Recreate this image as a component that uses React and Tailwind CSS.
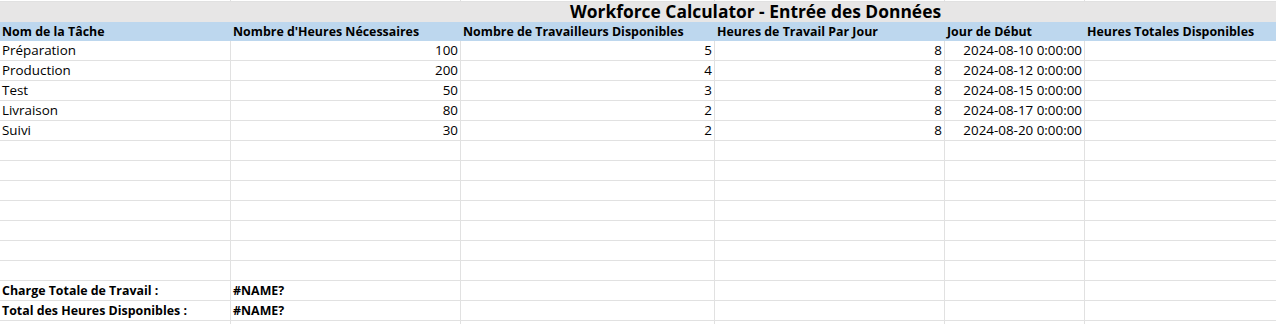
import React from "react";

const cols = "grid-cols-[231px_230px_254px_230px_140px_1fr]";
const font = { fontFamily: '"Open Sans", "Noto Sans", sans-serif' };

const data = [
  ["Préparation", "100", "5", "8", "2024-08-10 0:00:00"],
  ["Production", "200", "4", "8", "2024-08-12 0:00:00"],
  ["Test", "50", "3", "8", "2024-08-15 0:00:00"],
  ["Livraison", "80", "2", "8", "2024-08-17 0:00:00"],
  ["Suivi", "30", "2", "8", "2024-08-20 0:00:00"],
];

const headers = [
  "Nom de la Tâche",
  "Nombre d'Heures Nécessaires",
  "Nombre de Travailleurs Disponibles",
  "Heures de Travail Par Jour",
  "Jour de Début",
  "Heures Totales Disponibles",
];

function Cell({ children, right, bold, last }) {
  return (
    <div
      className={`h-5 border-b border-[#e1e1e1] ${last ? "" : "border-r"} flex items-end pb-[3px] overflow-visible whitespace-nowrap ${
        right ? "justify-end pr-[2px]" : "pl-[2px]"
      } ${bold ? "font-bold text-[12.4px]" : ""}`}
    >
      {children}
    </div>
  );
}

function Row({ cells = [], boldCols = [] }) {
  return (
    <div className={`grid ${cols}`}>
      {[0, 1, 2, 3, 4, 5].map((i) => {
        const v = cells[i] ?? "";
        const right = i >= 1 && i <= 4 && cells.length === 5;
        return (
          <Cell key={i} right={right} bold={boldCols.includes(i)} last={i === 5}>
            {v}
          </Cell>
        );
      })}
    </div>
  );
}

export default function App() {
  return (
    <div className="w-[1276px] h-[324px] overflow-hidden bg-white text-black text-[13.4px] leading-none" style={font}>
      <div className={`grid ${cols} h-[2px] border-b border-[#e1e1e1]`}>
        {[0, 1, 2, 3, 4, 5].map((i) => (
          <div key={i} className={i === 5 ? "" : "border-r border-[#e1e1e1]"} />
        ))}
      </div>
      <div className={`grid ${cols} h-[20px] bg-[#e7e6e6]`}>
        <div />
        <div className="col-span-5 flex items-end justify-center pb-[2px] font-bold text-[17.4px] leading-none pl-[4px]">
          Workforce Calculator - Entrée des Données
        </div>
      </div>
      <div className={`grid ${cols} h-[19px] bg-[#bdd7ee]`}>
        {headers.map((h, i) => (
          <div key={i} className="flex items-end pb-[3px] pl-[2px] font-bold text-[12.4px] whitespace-nowrap">
            {h}
          </div>
        ))}
      </div>
      {data.map((r, i) => (
        <Row key={i} cells={r} />
      ))}
      {Array.from({ length: 7 }).map((_, i) => (
        <Row key={"e" + i} />
      ))}
      <Row cells={["Charge Totale de Travail :", "#NAME?"]} boldCols={[0, 1]} />
      <Row cells={["Total des Heures Disponibles :", "#NAME?"]} boldCols={[0, 1]} />
      <Row />
    </div>
  );
}
